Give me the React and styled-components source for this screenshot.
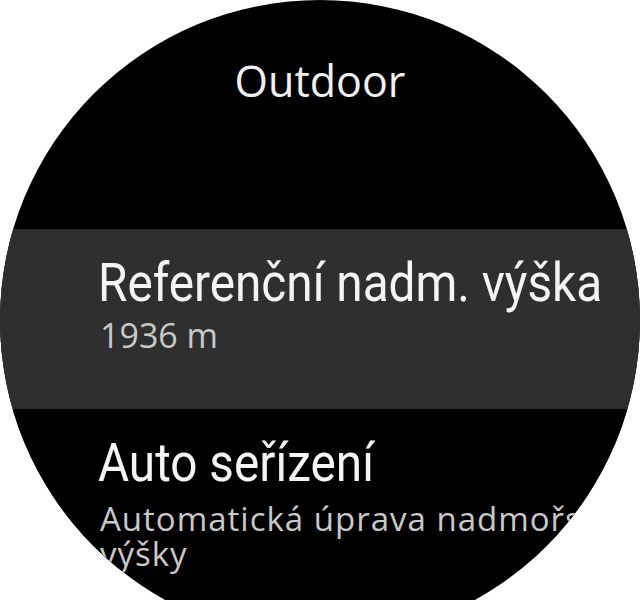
import React from 'react';
import styled, { createGlobalStyle } from 'styled-components';

const GlobalStyle = createGlobalStyle`
  html, body {
    margin: 0;
    padding: 0;
    background: #ffffff;
    overflow: hidden;
  }
`;

const Page = styled.div`
  width: 640px;
  height: 600px;
  overflow: hidden;
  background: #ffffff;
`;

const Watch = styled.div`
  width: 640px;
  height: 640px;
  border-radius: 50%;
  background: #000000;
  overflow: hidden;
  display: flex;
  flex-direction: column;
`;

const Header = styled.div`
  height: 229px;
  flex-shrink: 0;
  box-sizing: border-box;
  padding-top: 55px;
  text-align: center;
  font-family: "Open Sans", "Noto Sans", sans-serif;
  font-size: 43px;
  line-height: 1.2;
  color: #f0f0f0;
`;

const Item = styled.div`
  flex-shrink: 0;
  box-sizing: border-box;
  height: ${(p) => (p.tall ? '180px' : 'auto')};
  padding: 28px 0 0 98px;
  background: ${(p) => (p.selected ? '#2f2f2f' : '#000000')};
`;

const ItemTitle = styled.div`
  font-family: Roboto, "Liberation Sans", sans-serif;
  font-size: 53px;
  line-height: 53px;
  color: #f4f4f4;
  white-space: nowrap;
  transform: scaleX(0.9);
  transform-origin: left center;
`;

const ItemValue = styled.div`
  margin-top: ${(p) => (p.small ? '11px' : '5px')};
  font-family: "Open Sans", "Noto Sans", sans-serif;
  font-size: ${(p) => (p.small ? '33px' : '34px')};
  line-height: ${(p) => (p.small ? '35px' : '40px')};
  letter-spacing: ${(p) => (p.small ? '1px' : '0')};
  color: #c9c9c9;
  padding-left: 2px;
`;

const items = [
  { title: 'Referenční nadm. výška', value: '1936 m', selected: true },
  { title: 'Auto seřízení', value: 'Automatická úprava nadmořské výšky', small: true },
];

export default function App() {
  return (
    <Page>
      <GlobalStyle />
      <Watch>
        <Header>Outdoor</Header>
        {items.map((it) => (
          <Item key={it.title} selected={it.selected} tall={it.selected}>
            <ItemTitle>{it.title}</ItemTitle>
            <ItemValue small={it.small}>{it.value}</ItemValue>
          </Item>
        ))}
      </Watch>
    </Page>
  );
}
